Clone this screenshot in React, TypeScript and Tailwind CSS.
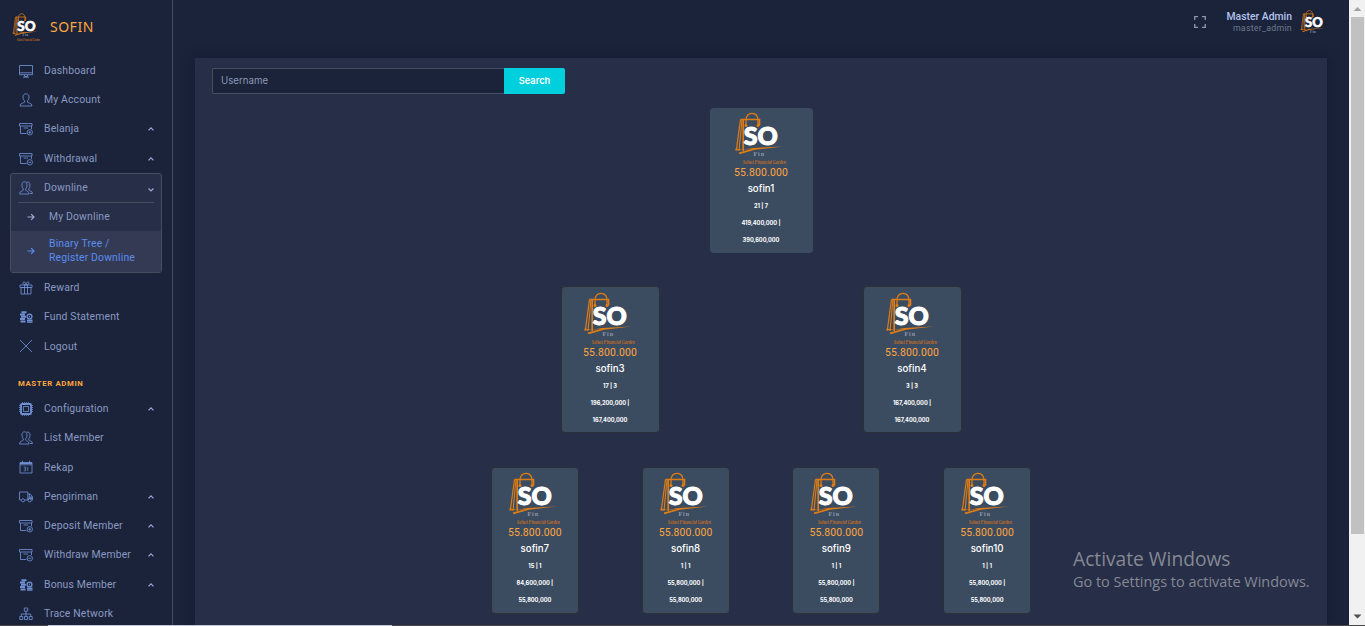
import React from "react";

type IconName =
  | "monitor" | "user" | "boxPlus" | "boxMinus" | "users" | "gift" | "coins"
  | "close" | "chip" | "calendar" | "truck" | "network";

const ICONS: Record<IconName, React.ReactNode> = {
  monitor: (
    <>
      <path d="M.5 1.500h13v9.200h-13zM.5 8.800h13" />
      <path d="M5.500 10.700v1.800h3v-1.800M4 13.200h6" />
    </>
  ),
  user: <path d="M7 .8c-2 0-3 1.300-3 3.200 0 1.800.5 2.800 1.500 3.800v1.400c-1 1-4.500.8-4.500 3.800h12c0-3-3.500-2.800-4.500-3.800V7.800C9.500 6.800 10 5.800 10 4 10 2.100 9 .8 7 .8z" />,
  boxPlus: (
    <>
      <path d="M.5 1.500h12.500V4H.5zM1.500 4v7.500h6M12.500 4v3M4.500 6h4.500" />
      <circle cx="10.800" cy="10.300" r="2.700" />
      <path d="M10.800 8.800v3M9.300 10.300h3" />
    </>
  ),
  boxMinus: (
    <>
      <path d="M.5 1.500h12.500V4H.5zM1.500 4v7.500h6M12.500 4v3M4.500 6h4.500" />
      <circle cx="10.800" cy="10.300" r="2.700" />
      <path d="M9.300 10.300h3" />
    </>
  ),
  users: (
    <>
      <path d="M5.500 .8C3.800.8 3 2.100 3 4c0 1.800.4 2.800 1.300 3.800v1.400C3.400 10.200.5 10 .5 13H10c0-3-2.400-2.800-3.300-3.800V7.800C7.600 6.800 8 5.800 8 4 8 2.100 7.200.8 5.500.8z" />
      <path d="M7.500 1.200c2.400-.6 3.500.7 3.500 2.800 0 1.800-.5 2.800-1.200 3.800v1.400c.8 1 3.700.8 3.700 3.300H11" />
    </>
  ),
  gift: (
    <>
      <path d="M1 4h12v2.500H1zM2 6.500h10V13H2zM5.500 4v9M8.500 4v9" />
      <path d="M7 4C3 3.500 3.500 1 5 1s2 1.500 2 3c0-1.500.5-3 2-3s2 2.500-2 3z" />
    </>
  ),
  coins: (
    <>
      <path d="M2.500 2.200h5M1 4.500h5M2 6.800h5M1 9.100h5M1.500 11.400h5" strokeWidth="2" />
      <circle cx="10.500" cy="6.500" r="2.400" strokeWidth="1.300" />
      <path d="M8 10.200h5.500M8 12h5.500" strokeWidth="1.400" />
      <path d="M10.500 5.600v1.800" />
    </>
  ),
  close: <path d="M1 1l12 12M13 1L1 13" />,
  chip: (
    <>
      <rect x="2" y="2" width="10" height="10" rx="1" strokeWidth="1.900" />
      <path d="M4.500 4.500h5v5h-5z" />
      <path d="M3 .6h8M3 13.400h8M.6 3v8M13.400 3v8" strokeDasharray="1 1" />
    </>
  ),
  calendar: (
    <>
      <path d="M1 2.500h12V13H1zM1 4.800h12" />
      <path d="M1 3.300h12" strokeWidth="1.400" />
      <path d="M3.500.8v2M10.500.8v2" />
      <path d="M4.700 7h2v3.800h-2M5.200 8.900h1.500M8.800 7v4" strokeWidth="0.700" />
    </>
  ),
  truck: (
    <>
      <path d="M.5 2h8.300v8H6M2 10H.5V2M8.800 4h2.500l2.200 3v3h-1" />
      <path d="M10.300 4v3h3" />
      <path d="M9.200 8.200h4" strokeWidth="1.300" />
      <circle cx="4" cy="10.300" r="1.600" />
      <circle cx="10.800" cy="10.300" r="1.600" />
    </>
  ),
  network: (
    <>
      <path d="M5.300 1h3.400v3.200H5.300zM.8 9.500h3v3h-3zM5.500 9.500h3v3h-3zM10.200 9.500h3v3h-3z" />
      <path d="M7 4.200v5.300M2.300 9.500V7h9.400v2.500" />
    </>
  ),
};

function Icon({ name }: { name: IconName }) {
  return (
    <svg viewBox="0 0 14 14" className="h-3.5 w-3.5 shrink-0" fill="none" stroke="#6f8fd2" strokeWidth="0.850">
      {ICONS[name]}
    </svg>
  );
}

function Chevron({ down = false }: { down?: boolean }) {
  return (
    <svg viewBox="0 0 8 6" className={down ? "mt-1 -mr-px h-1.5 w-2" : "h-1.5 w-2"} fill="none" stroke="#9aaad4" strokeWidth="1.200">
      <path d={down ? "M1.500 1.500L4 4l2.500-2.500" : "M1.500 4.300L4 1.800l2.500 2.500"} />
    </svg>
  );
}

function Logo({ className, tagline = true }: { className: string; tagline?: boolean }) {
  return (
    <svg viewBox="0 0 54 54" className={`overflow-visible ${className}`} fill="none">
      <g stroke="#e07c14">
        <path d="M6.500 7.500L2.300 38.500" strokeWidth="1.200" />
        <path d="M8 7.500L5 39" strokeWidth="1.100" />
        <path d="M6.500 7.500h19v6" strokeWidth="1.600" />
        <path d="M9.200 8v31" strokeWidth="1.700" />
        <path d="M12 13.500V8.500c0-5 2.700-7.200 6-7.200s6 2.200 6 7.200v5" strokeWidth="1.300" />
      </g>
      <g fill="#e07c14">
        <circle cx="12" cy="13.500" r="1.500" />
        <circle cx="24" cy="13.500" r="1.500" />
        <path d="M1.500 36.500l7 1.300 11-1.800 29-1.500L21 37.800 5.500 42.300l-.8-1.800L18 37 1.500 38.500z" />
      </g>
      <text x="9.800" y="33" fill="#fff" stroke="#fff" strokeWidth="1.100" fontFamily="Lato, sans-serif" fontWeight="900" fontSize="25.500" textLength="34" lengthAdjust="spacingAndGlyphs">SO</text>
      <text x="19.500" y="43.700" fill="#9299a8" fontFamily="Liberation Serif, serif" fontWeight="700" fontSize="6" textLength="10.500">Fin</text>
      {tagline && (
        <text x="8.800" y="52.300" fill="#c06c24" fontFamily="Liberation Serif, serif" fontStyle="italic" fontWeight="700" fontSize="6.500" textLength="43" lengthAdjust="spacingAndGlyphs">Solusi Financial Garden</text>
      )}
    </svg>
  );
}

interface Item {
  icon: IconName;
  label: string;
  more?: boolean;
}

const TOP: Item[] = [
  { icon: "monitor", label: "Dashboard" },
  { icon: "user", label: "My Account" },
  { icon: "boxPlus", label: "Belanja", more: true },
  { icon: "boxMinus", label: "Withdrawal", more: true },
];
const MIDDLE: Item[] = [
  { icon: "gift", label: "Reward" },
  { icon: "coins", label: "Fund Statement" },
  { icon: "close", label: "Logout" },
];
const ADMIN: Item[] = [
  { icon: "chip", label: "Configuration", more: true },
  { icon: "users", label: "List Member" },
  { icon: "calendar", label: "Rekap" },
  { icon: "truck", label: "Pengiriman", more: true },
  { icon: "boxPlus", label: "Deposit Member", more: true },
  { icon: "boxMinus", label: "Withdraw Member", more: true },
  { icon: "coins", label: "Bonus Member", more: true },
  { icon: "network", label: "Trace Network" },
];

function NavRow({ icon, label, more }: Item) {
  return (
    <div className="flex h-[29.300px] shrink-0 items-center pr-[17px] pl-[19px] text-[10.400px] tracking-[0.160px] text-[#8a99c2]">
      <Icon name={icon} />
      <span className="ml-[11px] flex-1 whitespace-nowrap">{label}</span>
      {more && <Chevron />}
    </div>
  );
}

function Arrow({ color }: { color: string }) {
  return (
    <svg viewBox="0 0 8 8" className="h-2 w-2 shrink-0" fill="none" stroke={color} strokeWidth="1.200">
      <path d="M.5 4h6.500M4.200 1.200L7 4 4.200 6.800" />
    </svg>
  );
}

function Sidebar() {
  return (
    <aside className="flex w-[173px] shrink-0 flex-col overflow-hidden border-r border-[#474d5e] bg-[#1a233a]">
      <div className="flex h-[56px] shrink-0 items-start pt-3 pl-3">
        <Logo className="mt-px h-[29px] w-[29px]" />
        <span className="mt-[5px] ml-[9px] font-['Noto_Sans',sans-serif] text-[14px] leading-5 tracking-[0.500px] text-[#ffa63e]">SOFIN</span>
      </div>
      {TOP.map((i) => <NavRow key={i.label} {...i} />)}
      <div className="mx-[10px] h-[100px] shrink-0 rounded-[3px] border border-[#474d5e] bg-[#272e48] text-[10.400px] tracking-[0.160px]">
        <div className="mx-[7px] flex h-[29px] items-center border-b border-[#474d5e] text-[#8a99c2]">
          <span className="ml-px"><Icon name="users" /></span>
          <span className="ml-[11px] flex-1">Downline</span>
          <Chevron down />
        </div>
        <div className="flex h-[28px] items-center pl-4 text-[#8a99c2]">
          <Arrow color="#9aaad4" />
          <span className="ml-[14px]">My Downline</span>
        </div>
        <div className="flex h-[41px] items-center bg-[#343a54] pb-[2px] pl-4 leading-[14px] text-[#5a8dee]">
          <Arrow color="#5a8dee" />
          <span className="ml-[14px]">Binary Tree /<br />Register Downline</span>
        </div>
      </div>
      {MIDDLE.map((i) => <NavRow key={i.label} {...i} />)}
      <div className="flex h-[33px] shrink-0 items-end pl-[18px]">
        <span className="pb-[5px] text-[7.800px] leading-[10px] font-bold tracking-[0.620px] text-[#ffa63e]">MASTER ADMIN</span>
      </div>
      {ADMIN.map((i) => <NavRow key={i.label} {...i} />)}
    </aside>
  );
}

interface Member {
  name: string;
  pair: string;
  left: string;
  right: string;
}

function Card({ member, size }: { member: Member; size: string }) {
  return (
    <div className={`flex flex-col items-center rounded-[4px] bg-[#3b4c61] text-white ${size}`}>
      <Logo className="h-[54px] w-[54px] shrink-0" />
      <span className="text-[10.400px] leading-[13px] tracking-[0.180px] text-[#ffa63e]">55.800.000</span>
      <span className="mt-[3px] font-[Inter] text-[9.700px] leading-[14px] font-medium">{member.name}</span>
      <div className="mt-px flex flex-col items-center font-[Inter] text-[5.700px] leading-[17px] font-bold tracking-[-0.040px] whitespace-nowrap">
        <span>{member.pair}</span>
        <span>{member.left} |</span>
        <span>{member.right}</span>
      </div>
    </div>
  );
}

const SECOND: Member[] = [
  { name: "sofin3", pair: "17 | 3", left: "196,200,000", right: "167,400,000" },
  { name: "sofin4", pair: "3 | 3", left: "167,400,000", right: "167,400,000" },
];
const THIRD: Member[] = [
  { name: "sofin7", pair: "15 | 1", left: "84,600,000", right: "55,800,000" },
  { name: "sofin8", pair: "1 | 1", left: "55,800,000", right: "55,800,000" },
  { name: "sofin9", pair: "1 | 1", left: "55,800,000", right: "55,800,000" },
  { name: "sofin10", pair: "1 | 1", left: "55,800,000", right: "55,800,000" },
];

export default function App() {
  return (
    <div className="relative flex h-[626px] w-[1365px] flex-col overflow-hidden bg-[#1a233a] font-[Roboto,sans-serif]">
      <div className="flex h-[625px] shrink-0">
        <Sidebar />
        <main className="flex min-w-0 flex-1 flex-col px-[22px]">
          <header className="flex h-[58px] shrink-0 items-start justify-end pr-px">
            <svg viewBox="0 0 12 12" className="mt-[16px] h-3 w-3" fill="none" stroke="#8a99b5" strokeWidth="1.300">
              <path d="M.7 4V.7H4M8 .7h3.300V4M11.300 8v3.300H8M4 11.300H.7V8" />
            </svg>
            <div className="mt-[11px] ml-5 text-right">
              <div className="text-[10.400px] leading-[11px] font-medium text-[#b3c3ee]">Master Admin</div>
              <div className="text-[8.800px] leading-[12px] tracking-[0.260px] text-[#6d7990]">master_admin</div>
            </div>
            <div className="mt-[9px] ml-[8px] h-[27px] w-[26px] rounded-full">
              <Logo className="h-[30px] w-[28px]" tagline={false} />
            </div>
          </header>
          <section className="flex flex-1 flex-col bg-[#272e48] shadow-[0_0_12px_rgba(10,15,35,0.4)]">
            <div className="mt-[10px] ml-[17px] flex h-[26px] font-[Inter]">
              <div className="flex w-[292px] items-center rounded-l-[2px] border border-r-0 border-[#474d5e] bg-[#1a233a] pl-[8px] text-[9.700px] text-[#8a99b5]">Username</div>
              <button className="w-[61px] rounded-r-[2px] bg-[#00cfdd] text-[9.300px] font-semibold text-white">Search</button>
            </div>
            <div className="mx-auto mt-[14px] flex w-[603px] flex-col items-center">
              <Card member={{ name: "sofin1", pair: "21 | 7", left: "419,400,000", right: "390,600,000" }} size="h-[145px] w-[103px] pt-[4px]" />
              <div className="mt-[33px] flex w-full justify-center gap-[203px]">
                {SECOND.map((m) => <Card key={m.name} member={m} size="h-[147px] w-[99px] border border-[#2c3038] pt-[5px]" />)}
              </div>
              <div className="mt-[34px] grid w-full grid-cols-4 justify-items-center">
                {THIRD.map((m) => <Card key={m.name} member={m} size="h-[147px] w-[88px] border border-[#2c3038] pt-[4px]" />)}
              </div>
            </div>
          </section>
        </main>
        <div className="flex w-4 shrink-0 flex-col items-center bg-[#f1f1f1]">
          <svg viewBox="0 0 16 17" className="h-[17px] w-4 shrink-0"><path d="M4.500 11L8.500 7l4 4z" fill="#a3a3a3" /></svg>
          <div className="h-[517px] w-[13px] bg-[#c1c1c1]" />
          <div className="flex-1" />
          <svg viewBox="0 0 16 17" className="h-[17px] w-4 shrink-0"><path d="M4.500 6.500h8l-4 4z" fill="#505050" /></svg>
        </div>
      </div>
      <div className="flex h-px bg-[#474747]">
        <div className="ml-12 w-[344px] bg-[#c4c8d0]" />
      </div>
      <div className="absolute top-[547px] left-[1073px] font-['Open_Sans',sans-serif] whitespace-nowrap text-[#858993]">
        <div className="text-[19.200px] leading-[24px]">Activate Windows</div>
        <div className="text-[14.450px] leading-[21px]">Go to Settings to activate Windows.</div>
      </div>
    </div>
  );
}
